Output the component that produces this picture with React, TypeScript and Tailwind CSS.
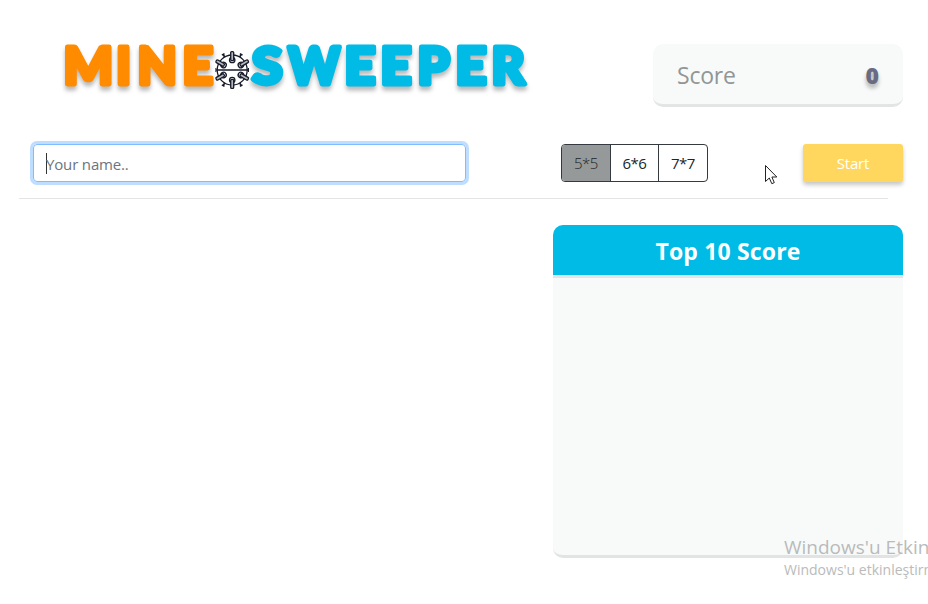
const MINE: [string, number, number][] = [
  ["M", 65, 46],
  ["I", 118, 12.5],
  ["N", 139, 36],
  ["E", 184, 29.5],
];
const SWEEPER: [string, number, number][] = [
  ["S", 251, 33.5],
  ["W", 286, 54],
  ["E", 346, 30],
  ["E", 382, 30],
  ["P", 419, 33],
  ["E", 457, 30],
  ["R", 493, 35],
];
// Ink left bearing and ink width of each capital, in em.
const INK: Record<string, [number, number]> = {
  M: [0.076, 0.79],
  I: [0.082, 0.163],
  N: [0.076, 0.615],
  E: [0.076, 0.46],
  S: [0.03, 0.51],
  W: [0.003, 1.01],
  P: [0.076, 0.55],
  R: [0.076, 0.59],
};
const SIZE = 50.5;
const STROKE = 4.8;

function Letters({ items, color }: { items: [string, number, number][]; color: string }) {
  return (
    <g fill={color} stroke={color} strokeWidth={STROKE} strokeLinejoin="round" fontSize={SIZE} fontWeight="900" fontFamily="Lato, sans-serif">
      {items.map(([c, x, w], i) => {
        const [lb, iw] = INK[c];
        const sx = w / (iw * SIZE + STROKE);
        return (
          <text key={i} transform={`translate(${x + (STROKE / 2 - lb * SIZE) * sx} 84) scale(${sx} 1)`}>
            {c}
          </text>
        );
      })}
    </g>
  );
}

function Mine() {
  const spikes = [0, 60, 120, 180, 240, 300];
  const nubs = [30, 150, 210, 330];
  return (
    <g transform="translate(232.2 70)" fill="none" stroke="#171b29" strokeWidth="1.3">
      <circle r="15" />
      <path d="M-16 0H16" strokeWidth="1.5" />
      <path d="M-16.3 -2V2M16.3 -2V2" strokeWidth="1" />
      {nubs.map((a) => (
        <path key={a} transform={`rotate(${a})`} d="M0 -15V-17.5M-1.5 -18H1.5" strokeWidth="1.6" />
      ))}
      {spikes.map((a) => (
        <g key={a} transform={`rotate(${a})`}>
          <circle cy="-10" r="2.7" fill="#fff" />
          <rect x="-1.5" y="-18.4" width="3" height="9" rx="1" fill="#b5b9bd" />
        </g>
      ))}
    </g>
  );
}

export default function App() {
  return (
    <div className="relative h-[604px] w-[928px] overflow-hidden bg-white font-['Open_Sans',sans-serif]">
      <header className="flex h-[144px] justify-between pr-[25px]">
        <svg width="560" height="120" viewBox="0 0 560 120" role="img" aria-label="MINESWEEPER">
          <g className="drop-shadow-[0_4px_2px_rgba(0,0,0,0.28)]">
            <Letters items={MINE} color="#ff8b00" />
            <Letters items={SWEEPER} color="#00bbe6" />
          </g>
          <Mine />
        </svg>
        <div className="mt-11 flex h-[63px] w-[250px] items-center justify-between rounded-[10px] border-b-3 border-[#e3e4e4] bg-[#f8faf9] px-6 pt-0.5">
          <span className="text-[23px] tracking-[-0.2px] text-[#919696]">Score</span>
          <span className="text-[23px] font-extrabold text-[#686b82] [text-shadow:0_4px_4px_rgba(0,0,0,0.3)]">0</span>
        </div>
      </header>

      <div className="flex h-[38px] pl-[33px]">
        <div className="flex w-[433px] items-center rounded-[4px] border border-[#80bdff] pl-3 shadow-[0_0_0_3px_#bfdeff]">
          <span className="h-[21px] w-px bg-[#333]" />
          <span className="-ml-px pt-0.5 text-[15px] tracking-[-0.16px] text-[#6c757d]">Your name..</span>
        </div>
        <div className="ml-[95px] flex w-[147px] overflow-hidden rounded-[4px] border border-[#343a40] text-[15px] tracking-[-0.5px] text-[#212529]">
          <button className="w-[49px] border-r border-[#343a40] bg-[#959999] font-light">5*5</button>
          <button className="w-[48px] border-r border-[#343a40]">6*6</button>
          <button className="w-[48px]">7*7</button>
        </div>
        <button className="ml-[95px] w-[100px] rounded-[3px] bg-[#ffd75e] text-[15px] tracking-[-0.2px] text-white shadow-[0_3px_4px_rgba(0,0,0,0.22)]">Start</button>
      </div>

      <div className="mt-4 ml-[19px] h-px w-[869px] bg-[#e4e4e4]" />

      <section className="mt-[26px] ml-[553px] h-[333px] w-[350px] overflow-hidden rounded-[10px] border-b-3 border-[#e2e3e3] bg-[#f8faf9]">
        <h2 className="flex h-[53px] items-center justify-center border-b-3 border-[#e4e5e6] bg-[#00bbe6] pt-0.5 text-[23px] font-bold tracking-[0.16px] text-white">
          Top 10 Score
        </h2>
      </section>

      <div className="absolute top-[534px] left-[784px] whitespace-nowrap text-[#b9bbbb]">
        <div className="text-[19px] leading-[26px]">Windows'u Etkin</div>
        <div className="text-[14px] leading-[20px]">Windows'u etkinleştirm</div>
      </div>

      <svg className="absolute top-[165px] left-[765px]" width="13" height="20" viewBox="0 0 13 20">
        <path d="M.5 .5V16.5L4.3 13L6.8 18.7L9.3 17.6L6.9 12H11.8Z" fill="#fff" stroke="#222" />
      </svg>
    </div>
  );
}
